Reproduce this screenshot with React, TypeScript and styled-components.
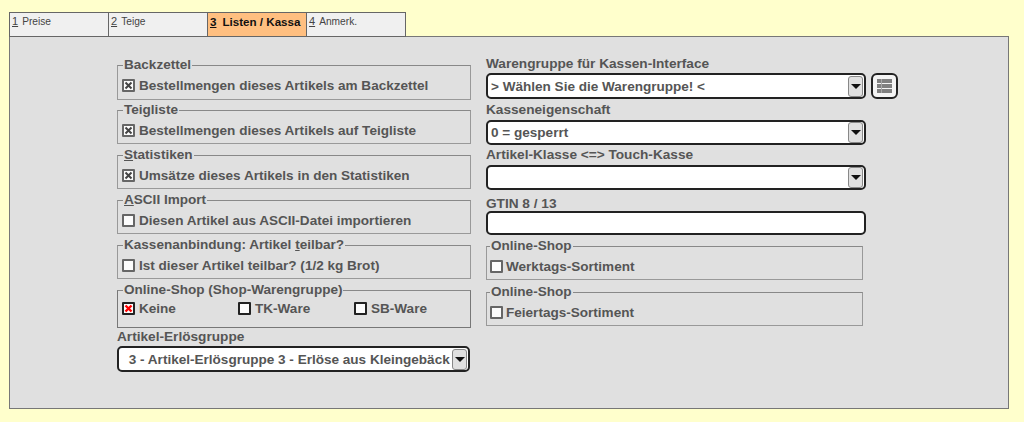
import React from 'react';
import styled, { createGlobalStyle } from 'styled-components';

const Global = createGlobalStyle`
  html, body { margin: 0; padding: 0; background: #ffffcc; }
  body { font-family: "Liberation Sans", Arial, sans-serif; }
  * { box-sizing: border-box; }
`;

const Page = styled.div`
  width: 1024px;
  height: 422px;
  padding: 12px 15px 0 9px;
  overflow: hidden;
`;

const TabBar = styled.div`
  display: flex;
  height: 25px;
  margin-bottom: -1px;
  position: relative;
`;

const Tab = styled.div<{ $active?: boolean }>`
  width: 100px;
  height: 25px;
  margin-right: -1px;
  padding: ${p => (p.$active ? '2px 0 0 2px' : '1px 0 0 2px')};
  border: 1px solid #666;
  background: ${p => (p.$active ? '#ffbf80' : '#f0f0f0')};
  color: ${p => (p.$active ? '#111' : '#444')};
  font-size: ${p => (p.$active ? '11.6px' : '10.2px')};
  font-weight: ${p => (p.$active ? 700 : 400)};
  line-height: 14px;
  white-space: pre;
`;

const TabKey = styled.u<{ $active?: boolean }>`
  font-size: ${p => (p.$active ? '11.6px' : '11px')};
  margin-right: ${p => (p.$active ? '6px' : '4px')};
  text-underline-offset: 1px;
`;

const Panel = styled.div`
  width: 1000px;
  height: 373px;
  border: 1px solid #777;
  background: #e0e0e0;
  padding: 20px 0 0 107px;
  display: flex;
  gap: 15px;
  color: #555;
  font-size: 13.55px;
  font-weight: 700;
`;

const LeftColumn = styled.div`
  width: 354px;
  display: flex;
  flex-direction: column;
`;

const RightColumn = styled.div`
  width: 412px;
  margin-top: -2px;
  display: flex;
  flex-direction: column;
`;

const Group = styled.fieldset<{ $h?: number; $mb?: number; $dark?: boolean; $w?: number; $pl?: number }>`
  margin: 0 0 ${p => p.$mb ?? 3}px;
  padding: 0 0 0 ${p => p.$pl ?? 4}px;
  width: ${p => (p.$w ? `${p.$w}px` : 'auto')};
  height: ${p => p.$h ?? 42}px;
  min-width: 0;
  border: 1px solid ${p => (p.$dark ? '#777' : '#999')};
  border-top-color: #888;
`;

const Legend = styled.legend<{ $ml?: number }>`
  padding: 0 1px;
  margin-left: ${p => p.$ml ?? 1}px;
  line-height: 16px;
  white-space: nowrap;
`;

const Row = styled.div<{ $mt?: number }>`
  display: flex;
  align-items: center;
  height: 18px;
  margin-top: ${p => p.$mt ?? 3}px;
`;

const Check = styled.label<{ $w?: number; $gap?: number }>`
  display: flex;
  align-items: center;
  gap: ${p => p.$gap ?? 4}px;
  width: ${p => (p.$w ? `${p.$w}px` : 'auto')};
  white-space: nowrap;
`;

const Box = styled.span<{ $dark?: boolean }>`
  width: 13px;
  height: 13px;
  flex: none;
  display: inline-flex;
  align-items: center;
  justify-content: center;
  background: #fcfcfc;
  border: 2px solid ${p => (p.$dark ? '#222' : '#666')};
  border-radius: 1px;
`;

const FieldLabel = styled.div<{ $h: number; $pt?: number }>`
  height: ${p => p.$h}px;
  padding-top: ${p => p.$pt ?? 0}px;
  font-size: 13.65px;
  line-height: 16px;
  white-space: nowrap;
`;

const SelectRow = styled.div`
  display: flex;
  align-items: center;
  gap: 5px;
`;

const SelectBox = styled.div<{ $w: number; $h?: number; $pad?: number }>`
  width: ${p => p.$w}px;
  height: ${p => p.$h ?? 26}px;
  flex: none;
  display: flex;
  align-items: center;
  padding: 0 1px 0 ${p => p.$pad ?? 3}px;
  background: #fff;
  border: 2px solid #222;
  border-radius: 5px;
  white-space: nowrap;
  overflow: hidden;
`;

const SelectText = styled.span`
  flex: 1;
  overflow: hidden;
`;

const Arrow = styled.span`
  width: 15px;
  height: 21px;
  flex: none;
  display: flex;
  align-items: center;
  justify-content: center;
  background: #e0e0e0;
  border: 1px solid #888;
  border-radius: 3px;
  &::after {
    content: '';
    border-left: 5px solid transparent;
    border-right: 5px solid transparent;
    border-top: 5px solid #111;
  }
`;

const TextInput = styled.div`
  width: 380px;
  height: 24px;
  background: #fff;
  border: 2px solid #222;
  border-radius: 5px;
  margin-bottom: 3px;
`;

const IconButton = styled.div`
  width: 27px;
  height: 26px;
  margin-top: -1px;
  flex: none;
  display: flex;
  align-items: center;
  justify-content: center;
  background: #f4f4f4;
  border: 2px solid #222;
  border-radius: 6px;
`;

const Mark = ({ red }: { red?: boolean }) => (
  <svg width="9" height="9" viewBox="0 0 9 9">
    <path d="M1.5 1.5 7.5 7.5M7.5 1.5 1.5 7.5" stroke={red ? '#f00' : '#444'} strokeWidth={red ? 2.4 : 2} fill="none" />
  </svg>
);

const ListIcon = () => (
  <svg width="15" height="14" viewBox="0 0 15 14">
    <path d="M0 0h15v4H0zM0 5h15v4H0zM0 10h15v4H0z" fill="#808080" />
    <path d="M4.5 0v14" stroke="#a8a8a8" strokeWidth="1" />
  </svg>
);

const TabItem = ({ n, label, active }: { n: string; label: string; active?: boolean }) => (
  <Tab $active={active}><TabKey $active={active}>{n}</TabKey>{label}</Tab>
);

export default function App() {
  return (
    <Page>
      <Global />
      <TabBar>
        <TabItem n="1" label="Preise" />
        <TabItem n="2" label="Teige" />
        <TabItem n="3" label="Listen / Kassa" active />
        <TabItem n="4" label="Anmerk." />
      </TabBar>
      <Panel>
        <LeftColumn>
          <Group $h={43} $mb={2}>
            <Legend>Backzettel</Legend>
            <Row><Check><Box><Mark /></Box>Bestellmengen dieses Artikels am Backzettel</Check></Row>
          </Group>
          <Group>
            <Legend>Teigliste</Legend>
            <Row><Check><Box><Mark /></Box>Bestellmengen dieses Artikels auf Teigliste</Check></Row>
          </Group>
          <Group>
            <Legend><u>S</u>tatistiken</Legend>
            <Row><Check><Box><Mark /></Box>Umsätze dieses Artikels in den Statistiken</Check></Row>
          </Group>
          <Group>
            <Legend><u>A</u>SCII Import</Legend>
            <Row><Check><Box />Diesen Artikel aus ASCII-Datei importieren</Check></Row>
          </Group>
          <Group>
            <Legend>Kassenanbindung: Artikel <u>t</u>eilbar?</Legend>
            <Row><Check><Box />Ist dieser Artikel teilbar? (1/2 kg Brot)</Check></Row>
          </Group>
          <Group $h={46} $mb={0} $dark>
            <Legend>Online-Shop (Shop-Warengruppe)</Legend>
            <Row $mt={1}>
              <Check $w={116}><Box $dark><Mark red /></Box>Keine</Check>
              <Check $w={116}><Box $dark />TK-Ware</Check>
              <Check><Box $dark />SB-Ware</Check>
            </Row>
          </Group>
          <FieldLabel $h={18} $pt={1}>Artikel-Erlösgruppe</FieldLabel>
          <SelectBox $w={353} $pad={6}>
            <SelectText>&nbsp;3 - Artikel-Erlösgruppe 3 - Erlöse aus Kleingebäck</SelectText>
            <Arrow />
          </SelectBox>
        </LeftColumn>
        <RightColumn>
          <FieldLabel $h={18} $pt={1}>Warengruppe für Kassen-Interface</FieldLabel>
          <SelectRow>
            <SelectBox $w={380}>
              <SelectText>&gt; Wählen Sie die Warengruppe! &lt;</SelectText>
              <Arrow />
            </SelectBox>
            <IconButton><ListIcon /></IconButton>
          </SelectRow>
          <FieldLabel $h={21} $pt={3}>Kasseneigenschaft</FieldLabel>
          <SelectBox $w={380} $h={25}>
            <SelectText>0 = gesperrt</SelectText>
            <Arrow />
          </SelectBox>
          <FieldLabel $h={20} $pt={2}>Artikel-Klasse &lt;=&gt; Touch-Kasse</FieldLabel>
          <SelectBox $w={380} $h={25}>
            <SelectText />
            <Arrow />
          </SelectBox>
          <FieldLabel $h={21} $pt={6}>GTIN 8 / 13</FieldLabel>
          <TextInput />
          <Group $w={377} $mb={4} $pl={3}>
            <Legend $ml={0}>Online-Shop</Legend>
            <Row><Check $gap={3}><Box />Werktags-Sortiment</Check></Row>
          </Group>
          <Group $w={377} $pl={3}>
            <Legend $ml={0}>Online-Shop</Legend>
            <Row><Check $gap={3}><Box />Feiertags-Sortiment</Check></Row>
          </Group>
        </RightColumn>
      </Panel>
    </Page>
  );
}
